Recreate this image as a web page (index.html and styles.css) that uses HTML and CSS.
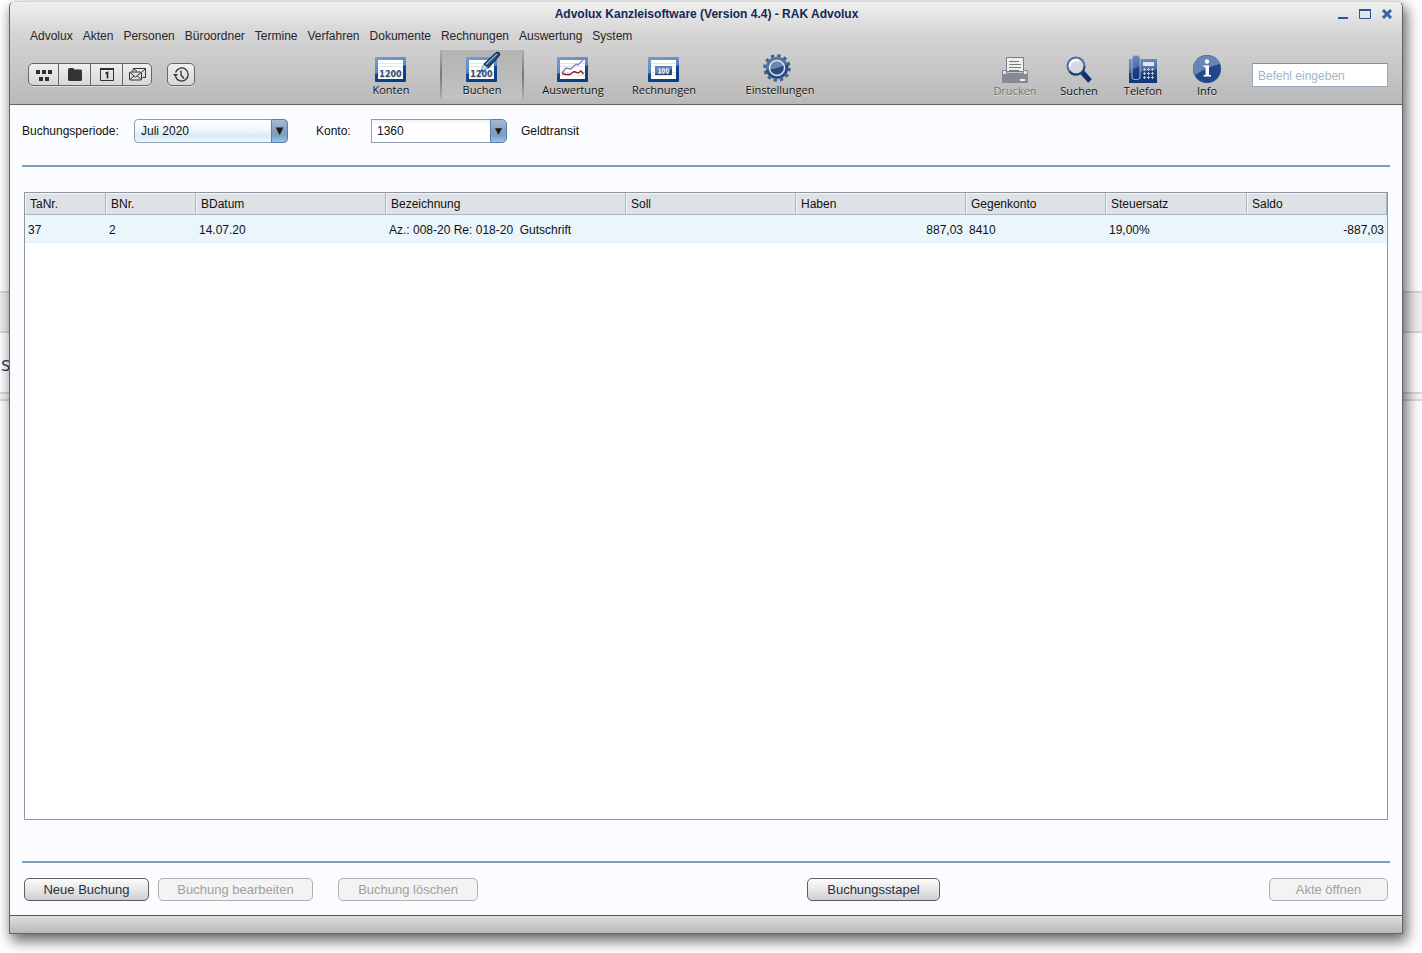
FILE: index.html
```html
<!DOCTYPE html>
<html lang="de">
<head>
<meta charset="utf-8">
<title>Advolux Kanzleisoftware (Version 4.4) - RAK Advolux</title>
<link rel="stylesheet" href="styles.css">
</head>
<body>
<div class="backdrop"><span class="backdrop-text">s</span></div>
<svg class="defs" width="0" height="0" aria-hidden="true">
  <defs>
    <linearGradient id="frame" x1="0" y1="0" x2="0.35" y2="1">
      <stop offset="0" stop-color="#789ec9"/><stop offset="0.58" stop-color="#5a88bb"/><stop offset="0.62" stop-color="#0f4c8f"/><stop offset="1" stop-color="#083f82"/>
    </linearGradient>
    <linearGradient id="blue" x1="0" y1="0" x2="0.15" y2="1">
      <stop offset="0" stop-color="#7391bd"/><stop offset="0.55" stop-color="#4a6ca5"/><stop offset="0.6" stop-color="#1c4384"/><stop offset="1" stop-color="#143877"/>
    </linearGradient>
    <g id="sheet">
      <rect x="5" y="7" width="31" height="25" rx="1" fill="url(#frame)"/>
      <rect x="8" y="10" width="25" height="19" fill="#fff"/>
      <path d="M8 13.5h25M8 16.5h25M8 22.5h25M8 25.5h25" stroke="#e3e7ec"/>
    </g>
  </defs>
</svg>
<div class="window">
  <header class="header">
    <div class="titlebar">
      <h1 class="title">Advolux Kanzleisoftware (Version 4.4) - RAK Advolux</h1>
      <div class="window-buttons">
        <button class="window-button" aria-label="Minimieren"><svg width="12" height="12"><path d="M1 10h10" stroke="#26579b" stroke-width="2"/></svg></button>
        <button class="window-button" aria-label="Maximieren"><svg width="12" height="12"><path d="M0.5 2v8.500h11V2" fill="none" stroke="#26579b"/><path d="M0 2h12" stroke="#26579b" stroke-width="2"/></svg></button>
        <button class="window-button" aria-label="Schließen"><svg width="12" height="12"><path d="M2 2l8 8M10 2l-8 8" stroke="#2e65a7" stroke-width="3"/></svg></button>
      </div>
    </div>
    <nav class="menu">
      <a href="#">Advolux</a><a href="#">Akten</a><a href="#">Personen</a><a href="#">Büroordner</a><a href="#">Termine</a><a href="#">Verfahren</a><a href="#">Dokumente</a><a href="#">Rechnungen</a><a href="#">Auswertung</a><a href="#">System</a>
    </nav>
    <div class="toolbar">
      <div class="button-group">
        <button class="small-button" aria-label="Übersicht"><svg width="16" height="12" fill="#303030"><path d="M0 1h4v4H0zM6 1h4v4H6zM12 1h4v4h-4zM3 8h4v4H3zM9 8h4v4H9z"/></svg></button>
        <button class="small-button" aria-label="Akten"><svg width="14" height="13"><path d="M0 1.500L1 0h4l1.500 1.500H13l1 1V12l-1 1H1l-1-1z" fill="#333"/></svg></button>
        <button class="small-button" aria-label="Kalender"><svg width="14" height="13"><path d="M0.500 0.500h13v12H0.500z" fill="none" stroke="#303030"/><path d="M0 1h14" stroke="#303030" stroke-width="2"/><path d="M5.500 5.500L7.500 4.500v6" fill="none" stroke="#222" stroke-width="1.600"/></svg></button>
        <button class="small-button" aria-label="Nachrichten"><svg width="17" height="13" fill="none" stroke="#303030"><path d="M3.500 3.500l1-3h12v9h-3M5 1l3 2.500M16 1l-3 3"/><rect x="0.500" y="4" width="12" height="8" rx="1"/><path d="M1 4.500l5.500 4.500L12 4.500M1 11.500l4-3.500M12 11.500L8.500 8"/></svg></button>
      </div>
      <button class="small-button history-button" aria-label="Verlauf"><svg width="16" height="15" fill="none" stroke="#303030"><path d="M2.500 9.500a6.500 6.500 0 1 0 0-4" stroke-width="1.300"/><path d="M8 3.500v4.500l3 3.500" stroke-width="1.300"/><path d="M0 7h5L2.500 10z" fill="#303030" stroke="none"/></svg></button>
      <nav class="tools">
        <button class="tool"><svg width="42" height="33"><use href="#sheet"/><text class="digits" x="20.500" y="27" text-anchor="middle">1200</text></svg>Konten</button>
        <button class="tool tool-active"><svg width="42" height="33"><use href="#sheet"/><text class="digits" x="20.500" y="27" text-anchor="middle">1200</text><path d="M23 14L34 3.500Q36 1.500 38 2.500Q39.500 4 38 6L27.500 18z" fill="#1d4b7c" stroke="#0a1f3c"/><path d="M25 14.500L36 4" stroke="#86aed2" stroke-width="1.500"/><path d="M22.500 14.500l4.500 3.500-5.500 3-2 .500z" fill="#c9dced" stroke="#4d7398" stroke-width="0.700"/><path d="M19 22l2-2.500 1.500 1.300z" fill="#0a2a52"/></svg>Buchen</button>
        <button class="tool"><svg width="42" height="33"><use href="#sheet"/><path d="M10 23l4-5 5 1 5-5 2 1 5-5" fill="none" stroke="#8581b4" stroke-width="1.400"/><path d="M10 23.500l4 1h4l4-3 4 1.500 3-2 2.500 3" fill="none" stroke="#971d2c" stroke-width="1.400"/></svg>Auswertung</button>
        <button class="tool"><svg width="42" height="33"><use href="#sheet"/><rect x="12" y="16" width="17" height="9" fill="#24478c"/><path d="M12 16h17v3l-17 5z" fill="#6681b3"/><text class="amount" x="20.500" y="23" text-anchor="middle">100</text></svg>Rechnungen</button>
        <button class="tool tool-settings"><svg width="42" height="33"><g transform="translate(18 18)"><circle r="12.300" fill="none" stroke="#3c5f94" stroke-width="3" stroke-dasharray="3.220"/><circle r="11.300" fill="#55759f"/><path d="M-11.300 2Q0 1 11-4A11.300 11.300 0 0 1-11.300 2" fill="#2b4c80"/><circle r="7.500" fill="#6c87ae" stroke="#dce4ee" stroke-width="1.600"/><path d="M-6.700 1.500Q0 1 6.500-2.500A6.700 6.700 0 0 1-6.700 1.500" fill="#2a4b80"/></g></svg>Einstellungen</button>
      </nav>
      <div class="actions">
        <button class="action" disabled><svg width="28" height="32"><path d="M5.500 5.500h17v14h-17z" fill="#eee" stroke="#777c85"/><path d="M8 9.500h10M8 12.500h12M8 15.500h12M8 18.500h10" stroke="#777c85"/><path d="M1.500 18.500h4v3h17v-3h4v4h-25z" fill="#e0e2e5" stroke="#858991"/><path d="M1 23h26v8H1z" fill="#858a94"/><path d="M19 28h5" stroke="#eee" stroke-width="2"/></svg>Drucken</button>
        <button class="action"><svg width="28" height="32"><path d="M17 20l8 9" stroke="#0e326c" stroke-width="5"/><circle cx="11" cy="14" r="8.500" fill="#dce1e7" fill-opacity="0.650" stroke="#486da4" stroke-width="2"/><path d="M4.500 19.500a8.500 8.500 0 0 0 15-5" fill="none" stroke="#1d427e" stroke-width="2"/><path d="M5 15a6 6 0 0 1 9-6" fill="none" stroke="#fff" stroke-width="2"/></svg>Suchen</button>
        <button class="action"><svg width="28" height="32"><path d="M0 7h28v24H0z" fill="url(#blue)"/><rect x="3" y="3.500" width="8" height="24" rx="2.500" fill="url(#blue)" stroke="#a5b8d5"/><path d="M14 10h11v4H14z" fill="#e0e6ef"/><path d="M14 17.500h3M18 17.500h3M22 17.500h3M14 21.500h3M18 21.500h3M22 21.500h3M14 25.500h3M18 25.500h3M22 25.500h3M15.500 16v3M19.500 16v3M23.500 16v3M15.500 20v3M19.500 20v3M23.500 20v3M15.500 24v3M19.500 24v3M23.500 24v3" stroke="#bac8df"/></svg>Telefon</button>
        <button class="action"><svg width="28" height="32"><circle cx="14" cy="17" r="14" fill="#214789"/><path d="M0 17A14 14 0 0 1 27 12Q16 14 2 23Q0 20 0 17" fill="#6686b7"/><circle cx="14" cy="9.500" r="2.200" fill="#fff"/><path d="M10.500 13.500h5.500v9.500h2v1.500h-7.500V23h2v-8h-2z" fill="#fff"/></svg>Info</button>
      </div>
      <input class="command" type="text" placeholder="Befehl eingeben" aria-label="Befehl eingeben">
    </div>
  </header>
  <main class="content">
    <div class="filters">
      <label class="period-label" for="period">Buchungsperiode:</label>
      <span class="period-box"><select class="period" id="period"><option>Juli 2020</option></select></span>
      <label class="account-label" for="account">Konto:</label>
      <span class="account-box"><input class="account" id="account" type="text" value="1360"><button class="account-open" aria-label="Konto auswählen"></button></span>
      <span class="account-name">Geldtransit</span>
    </div>
    <div class="table-box">
      <table class="bookings">
        <colgroup><col class="col-tanr"><col class="col-bnr"><col class="col-date"><col class="col-text"><col class="col-money"><col class="col-money"><col class="col-contra"><col class="col-tax"><col></colgroup>
        <thead><tr><th>TaNr.</th><th>BNr.</th><th>BDatum</th><th>Bezeichnung</th><th>Soll</th><th>Haben</th><th>Gegenkonto</th><th>Steuersatz</th><th>Saldo</th></tr></thead>
        <tbody><tr><td>37</td><td>2</td><td>14.07.20</td><td>Az.: 008-20 Re: 018-20&nbsp; Gutschrift</td><td></td><td class="number">887,03</td><td>8410</td><td>19,00%</td><td class="number">-887,03</td></tr></tbody>
      </table>
    </div>
    <div class="footer">
      <button class="button button-new">Neue Buchung</button>
      <button class="button button-edit" disabled>Buchung bearbeiten</button>
      <button class="button button-delete" disabled>Buchung löschen</button>
      <button class="button button-batch">Buchungsstapel</button>
      <button class="button button-open" disabled>Akte öffnen</button>
    </div>
  </main>
  <div class="statusbar"></div>
</div>
</body>
</html>
```
FILE: styles.css
```css
*, ::before, ::after { box-sizing: border-box; }

body {
  margin: 0;
  min-height: 100vh;
  padding: 1px 19px 19px 9px;
  display: flex;
  background: #fff;
  color: #111;
  font: 12px/16px "Liberation Sans", Arial, sans-serif;
  overflow: hidden;
}

button, input, select { font: inherit; color: inherit; margin: 0; }
button { padding: 0; border: 0; background: none; }
svg { display: block; }
.defs { position: absolute; }

.backdrop {
  position: absolute;
  inset: 0;
  overflow: hidden;
  background: linear-gradient(#fff 291px, #d8d8d8 291px 293px, #efefef 293px 331px, #d8d8d8 331px 333px, #fff 333px 392px, #d8d8d8 392px 394px, #f4f4f4 394px 399px, #d8d8d8 399px 401px, #fff 401px);
}
.backdrop-text {
  position: absolute;
  top: 352px;
  left: 1px;
  color: #2c3e5c;
  font: 20px/24px "Open Sans", sans-serif;
}

.window {
  position: relative;
  flex: 1;
  min-width: 0;
  display: flex;
  flex-direction: column;
  border: 1px solid #636363;
  border-top-color: #d4d4d4;
  border-radius: 6px 6px 0 0;
  background: #fbfcff;
  box-shadow: 3px 6px 14px 1px rgba(0, 0, 0, 0.6);
}

.header {
  border-bottom: 1px solid #636363;
  border-radius: 5px 5px 0 0;
  background: linear-gradient(#f0f0f0, #d5d5d5 30%, #b9b9b9);
}
.titlebar {
  display: grid;
  grid-template-columns: 1fr auto 1fr;
  align-items: center;
  height: 24px;
  padding: 0 9px 0 10px;
}
.title {
  grid-column: 2;
  margin: 0;
  color: #132956;
  font-size: 12px;
  line-height: 16px;
}
.window-buttons { display: flex; justify-content: flex-end; gap: 10px; }
.window-button { width: 12px; height: 12px; }

.menu { display: flex; gap: 10px; padding: 2px 20px 0; }
.menu a { color: #262626; text-decoration: none; }

.toolbar { display: flex; align-items: flex-start; height: 60px; padding: 6px 14px 0 18px; }
.button-group {
  display: flex;
  margin-top: 13px;
}
.small-button {
  display: flex;
  align-items: center;
  justify-content: center;
  width: 33px;
  height: 23px;
  border: 1px solid #666;
  background: linear-gradient(#efefef, #d7d7d7);
  box-shadow: 0 1px 0 #dedede;
}
.button-group .small-button + .small-button { margin-left: -1px; }
.button-group .small-button:first-child { width: 31px; border-radius: 5px 0 0 5px; }
.button-group .small-button:last-child { width: 30px; border-radius: 0 5px 5px 0; }
.history-button { width: 28px; margin: 13px 0 0 15px; border-radius: 5px; }

.tools { display: flex; gap: 7px; margin-left: 154px; }
.tool, .action {
  display: flex;
  flex-direction: column;
  align-items: center;
  height: 49px;
  color: #111;
  font: 11px/14px "Open Sans", sans-serif;
  text-shadow: 0 1px 0 #ddd;
}
.tool { width: 84px; }
.tool-active {
  border: solid;
  border-width: 0 2px;
  border-image: linear-gradient(#b0b0b0, #777 50%, #b0b0b0) 1;
  background: linear-gradient(#b3b3b3, #c2c2c2);
}
.tool-settings { margin-left: 25px; }
.digits { fill: #2e4d79; font: bold 8px "DejaVu Sans", sans-serif; }
.amount { fill: #dce4f1; font: bold 7px "Liberation Sans", sans-serif; }

.actions { display: flex; margin: 2px 13px 0 auto; }
.action { width: 64px; }
.action:disabled { color: #777; }
.command {
  width: 136px;
  height: 24px;
  margin-top: 13px;
  padding: 1px 5px 0;
  border: 1px solid #96aabc;
  border-top-color: #858fa0;
  background: #fff;
}
.command::placeholder { color: #a4b4c3; opacity: 1; }

.content { flex: 1; display: flex; flex-direction: column; padding: 0 12px; }
.filters {
  display: flex;
  align-items: center;
  height: 62px;
  padding: 0 0 9px;
  border-bottom: 2px solid #7b9fbf;
}
.period-label { width: 112px; }
.period-box { position: relative; width: 154px; }
.period {
  display: block;
  appearance: none;
  width: 100%;
  height: 24px;
  padding: 0 22px 0 6px;
  border: 1px solid #8f9eb5;
  border-radius: 4px;
  background: linear-gradient(#fff, #edf6fb 50%, #d8eaf4 70%, #edfaff);
}
.period-box::after, .account-open {
  width: 17px;
  height: 24px;
  border: 1px solid #5580b6;
  border-radius: 0 5px 5px 0;
  background: linear-gradient(#a6bacf, #83a0bf 50%, #7b9fc5 70%, #a2c2de);
  color: #1c1c1c;
  font: 10px/22px "DejaVu Sans", sans-serif;
  text-align: center;
}
.period-box::after {
  content: "▼";
  position: absolute;
  top: 0;
  right: 0;
  pointer-events: none;
}
.account-label { width: 55px; margin-left: 28px; }
.account-box { display: flex; width: 136px; }
.account {
  flex: 1;
  min-width: 0;
  height: 24px;
  padding: 0 5px;
  border: 1px solid #8f9eb0;
  border-right: 0;
  background: linear-gradient(#f1f1f1, #fff 4px);
}
.account-open::before { content: "▼"; font-size: 9px; }
.account-name { margin-left: 14px; }

.table-box {
  flex: 1;
  margin: 25px 2px 41px;
  border: 1px solid #9095a0;
  background: #fff;
}
.bookings { width: 100%; border-collapse: separate; border-spacing: 0; table-layout: fixed; }
.col-tanr { width: 81px; }
.col-bnr { width: 90px; }
.col-date { width: 190px; }
.col-text { width: 240px; }
.col-money { width: 170px; }
.col-contra { width: 140px; }
.col-tax { width: 141px; }
.bookings th {
  height: 22px;
  padding: 0 5px;
  border: solid #aab6c2;
  border-width: 0 1px 1px 0;
  background: #dee2e5;
  box-shadow: inset 1px 1px 0 #f3f6f8;
  font-weight: normal;
  text-align: left;
}
.bookings td { height: 28px; padding: 2px 3px 0; border-bottom: 1px solid #deeef5; background: #eaf5fc; white-space: nowrap; }
.bookings .number { text-align: right; }

.footer {
  display: flex;
  height: 54px;
  padding: 15px 2px 0;
  border-top: 2px solid #7b9fbf;
}
.button {
  height: 23px;
  border: 1px solid #5e5e5e;
  border-radius: 5px;
  background: linear-gradient(#fcfcfc, #e7e7e7 50%, #cecece);
  color: #263040;
  font-size: 13px;
}
.button:disabled { border-color: #b0b0b0; background: #f3f3f3; color: #a0a0a0; }
.button-new { width: 125px; }
.button-edit { width: 155px; margin-left: 9px; }
.button-delete { width: 140px; margin-left: 25px; }
.button-batch { width: 133px; margin-left: 329px; }
.button-open { width: 119px; margin-left: auto; }

.statusbar { height: 18px; border-top: 1px solid #555; background: linear-gradient(#dedede, #b9b9b9); }
```
